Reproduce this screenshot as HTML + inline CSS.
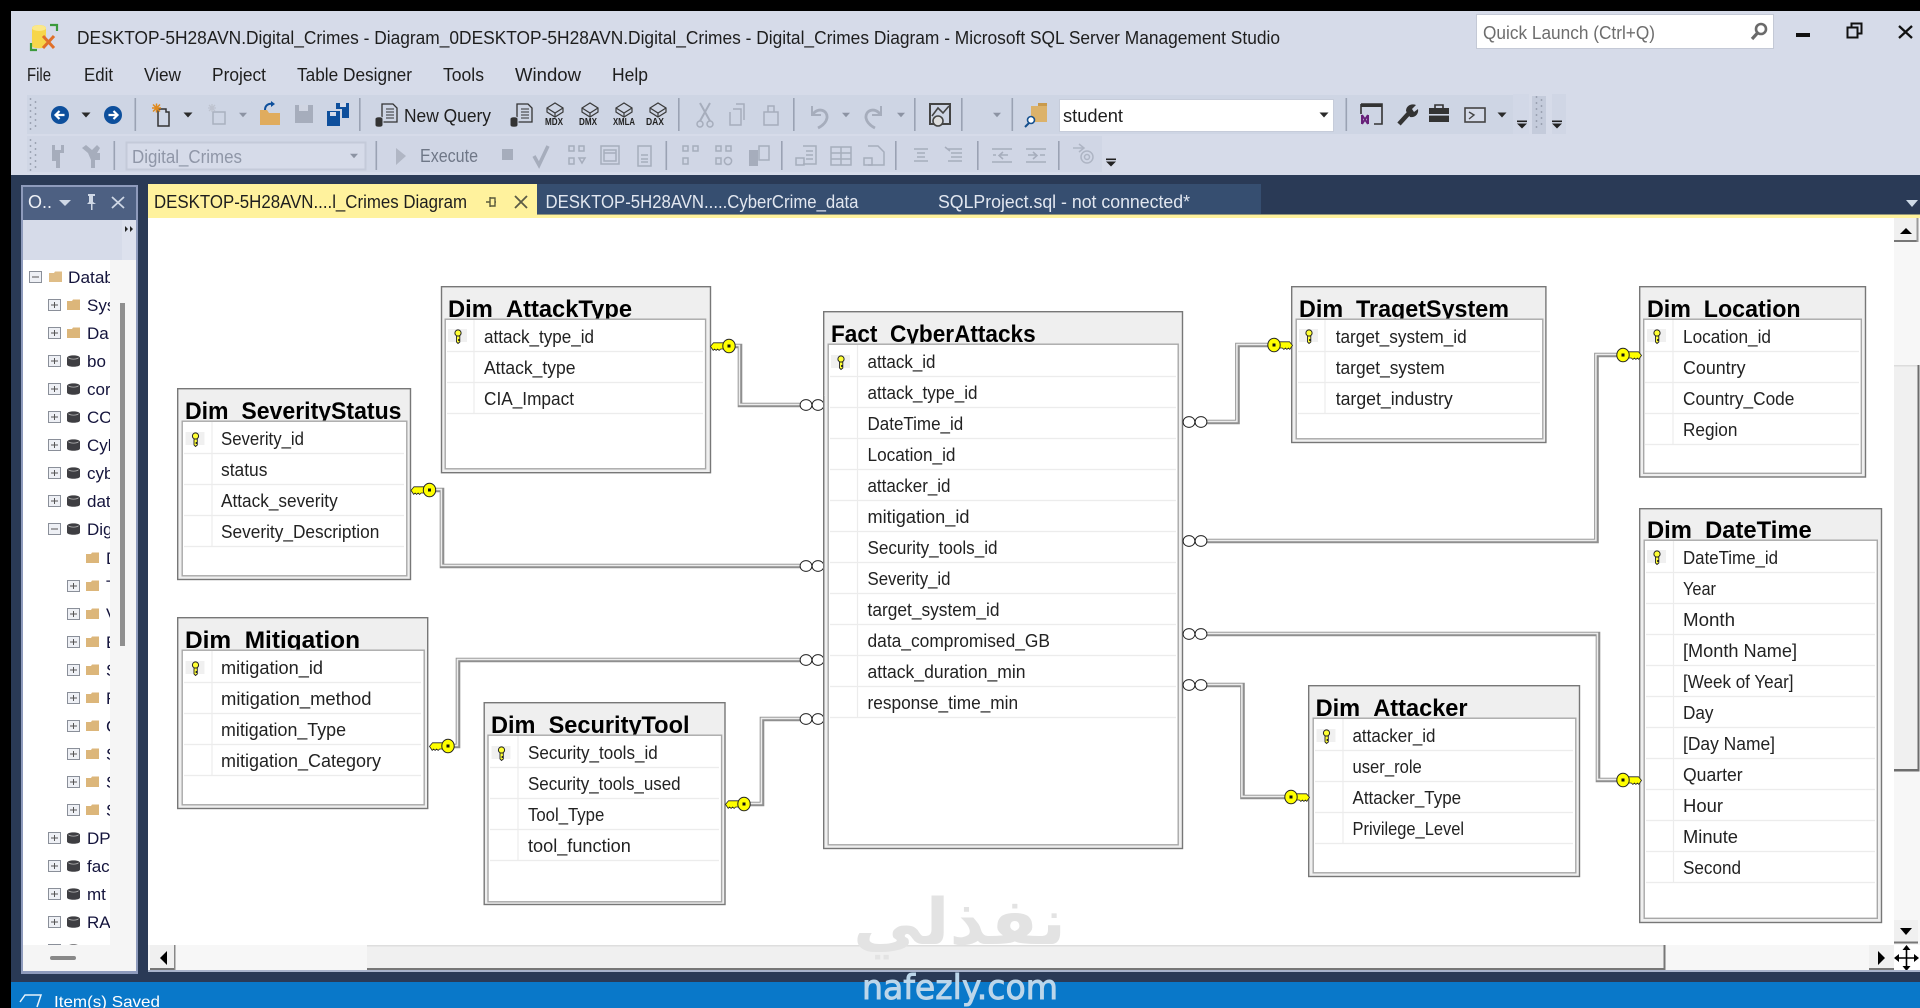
<!DOCTYPE html>
<html lang="en">
<head>
<meta charset="utf-8">
<title>Digital_Crimes Diagram - Microsoft SQL Server Management Studio</title>
<style>
html,body{margin:0;padding:0;background:#000;width:1920px;height:1008px;overflow:hidden}
svg{display:block}
text{font-family:"Liberation Sans",sans-serif;white-space:pre}
.r{font-size:18px;fill:#222}
.h{font-size:24px;font-weight:bold;fill:#000}
.m{font-size:18px;fill:#1e1e1e}
.tr{font-size:17px;fill:#14143c}
.o{fill:#efefef;stroke:#777;stroke-width:1.4}
.i{fill:#fff;stroke:#a8a8a8;stroke-width:1.4}
.l{stroke:#ececec;stroke-width:1.2;fill:none}
.c1{fill:none;stroke:#8f8f8f;stroke-width:4.6}
.c2{fill:none;stroke:#ececec;stroke-width:1.6}
.d{fill:none;stroke:#a6adbc;stroke-width:1.5}
.df{fill:#a6adbc}
.sep{fill:#9aa2b3}
</style>
</head>
<body>
<svg xmlns="http://www.w3.org/2000/svg" width="1920" height="1008" viewBox="0 0 1920 1008">
<defs>
<clipPath id="treeclip"><rect x="23" y="260" width="87" height="685"/></clipPath>
<g id="pk">
<rect x="-10" y="-7" width="19" height="13" fill="#f0f0f0"/>
<circle cx="0" cy="-3" r="3.1" fill="#ffff33" stroke="#222" stroke-width="1"/>
<path d="M-1.5 0V6L0 7.5L1.8 6V4.5H0.6V3.5H1.8V0Z" fill="#ffff33" stroke="#222" stroke-width="0.9"/>
</g>
<g id="key">
<path d="M5 -3.2H15.5L18.5 0.4L15.8 4.4L14.4 3L12.9 4.4L11.4 3L9.9 4.4L8.3 3H5Z" fill="#ffff00" stroke="#222" stroke-width="0.8"/>
<ellipse cx="0" cy="0" rx="6.2" ry="6.8" fill="#ffff00" stroke="#222" stroke-width="1"/>
<rect x="-1.5" y="-1.5" width="3" height="3" fill="#111"/>
</g>
<g id="inf">
<ellipse cx="-6" cy="0" rx="5.9" ry="5.4" fill="#fff" stroke="#222" stroke-width="1"/>
<ellipse cx="6" cy="0" rx="5.9" ry="5.4" fill="#fff" stroke="#222" stroke-width="1"/>
</g>
<g id="ep"><rect x="0.5" y="-5.5" width="12" height="11" fill="#eef0f5" stroke="#8a8f99"/><path d="M3 0H10M6.5 -3V3" stroke="#555" stroke-width="1"/></g>
<g id="em"><rect x="0.5" y="-5.5" width="12" height="11" fill="#eef0f5" stroke="#8a8f99"/><path d="M3 0H10" stroke="#555" stroke-width="1"/></g>
<path id="fo" d="M0 -4H5L6 -5.5H13V5H0Z" fill="#dcb67a"/>
<g id="db"><path d="M0 -3C0 -6.5 13 -6.5 13 -3V3.5C13 6.5 0 6.5 0 3.5Z" fill="#3e3e42"/><path d="M1.5 -3.2C3 -1.4 10 -1.4 11.5 -3.2" stroke="#bbb" stroke-width="0.8" fill="none"/></g>
<path id="tri" d="M-4.5 -2.5H4.5L0 2.5Z" fill="#2a2a2a"/>
<path id="trid" d="M-4 -2.2H4L0 2.2Z" fill="#8c93a3"/>
<g id="ovf"><rect x="-5" y="-4.5" width="10" height="1.6" fill="#222"/><path d="M-5 -1.5H5L0 3.5Z" fill="#222"/></g>
<g id="grip" fill="#8f96a6">
<circle cx="-2.5" cy="-15" r="0.9"/><circle cx="2.5" cy="-12" r="0.9"/><circle cx="-2.5" cy="-9" r="0.9"/><circle cx="2.5" cy="-6" r="0.9"/><circle cx="-2.5" cy="-3" r="0.9"/><circle cx="2.5" cy="0" r="0.9"/><circle cx="-2.5" cy="3" r="0.9"/><circle cx="2.5" cy="6" r="0.9"/><circle cx="-2.5" cy="9" r="0.9"/><circle cx="2.5" cy="12" r="0.9"/><circle cx="-2.5" cy="15" r="0.9"/>
</g>
<g id="cube" fill="none" stroke="#3a3a3a" stroke-width="1.2"><path d="M-8 -3L0 -8L8 -3V1L0 6L-8 1Z"/><path d="M-8 -3L0 2L8 -3M0 2V6"/></g>
<g id="sheet" fill="none" stroke="#333" stroke-width="1.3"><path d="M-5 -10H6L10 -6V8H-5Z"/><path d="M-1 -5H7M-1 -2H7M-1 1H7M-1 4H7" stroke-width="1"/></g>
</defs>

<!-- window chrome -->
<rect x="0" y="0" width="1920" height="1008" fill="#000"/>
<rect x="11" y="11" width="1909" height="997" fill="#d6dbe9"/>

<!-- app icon -->
<g transform="translate(30,22)">
<path d="M2 6C2 2 16 2 16 6V24C16 27 2 27 2 24Z" fill="#f7d64a"/>
<ellipse cx="9" cy="6" rx="7" ry="3" fill="#fbe88a"/>
<path d="M20 3H27V9" fill="none" stroke="#3c9a3c" stroke-width="2.2"/>
<path d="M1 21V28H7" fill="none" stroke="#3c9a3c" stroke-width="2.2"/>
<path d="M13 14L24 26M24 14L13 26" stroke="#e0702a" stroke-width="3"/>
</g>
<text x="77" y="44" class="m" textLength="1203" lengthAdjust="spacingAndGlyphs">DESKTOP-5H28AVN.Digital_Crimes - Diagram_0DESKTOP-5H28AVN.Digital_Crimes - Digital_Crimes Diagram - Microsoft SQL Server Management Studio</text>

<!-- quick launch -->
<rect x="1476.5" y="14.5" width="297" height="34" fill="#fff" stroke="#c4c9d6"/>
<text x="1483" y="39" font-size="18" fill="#6d6d6d" textLength="172" lengthAdjust="spacingAndGlyphs">Quick Launch (Ctrl+Q)</text>
<g transform="translate(1759,32)"><circle cx="2" cy="-3" r="5" fill="none" stroke="#6a6a6a" stroke-width="2.6"/><path d="M-1.5 1L-7 7" stroke="#6a6a6a" stroke-width="3.2"/></g>
<rect x="1796" y="33" width="14" height="4" fill="#111"/>
<path d="M1851.5 26.5V23.5H1861.5V33.5H1858M1847.5 27.5H1857.5V37.5H1847.5Z" fill="none" stroke="#111" stroke-width="2"/>
<path d="M1899 26L1912 38M1912 26L1899 38" stroke="#111" stroke-width="2.3"/>

<!-- menu -->
<text x="27" y="81" class="m" textLength="24" lengthAdjust="spacingAndGlyphs">File</text>
<text x="84" y="81" class="m" textLength="29" lengthAdjust="spacingAndGlyphs">Edit</text>
<text x="144" y="81" class="m" textLength="37" lengthAdjust="spacingAndGlyphs">View</text>
<text x="212" y="81" class="m" textLength="54" lengthAdjust="spacingAndGlyphs">Project</text>
<text x="297" y="81" class="m" textLength="115" lengthAdjust="spacingAndGlyphs">Table Designer</text>
<text x="443" y="81" class="m" textLength="41" lengthAdjust="spacingAndGlyphs">Tools</text>
<text x="515" y="81" class="m" textLength="66" lengthAdjust="spacingAndGlyphs">Window</text>
<text x="612" y="81" class="m" textLength="36" lengthAdjust="spacingAndGlyphs">Help</text>

<!-- toolbar 1 -->
<rect x="27" y="95" width="1486" height="39" fill="#ced5e4"/>
<rect x="1552" y="94" width="14" height="40" fill="#d0d6e5"/>
<rect x="1513" y="94" width="16" height="40" fill="#d2d8e7"/>
<rect x="1532" y="96" width="14" height="38" fill="#c4cbdb"/>
<use href="#grip" x="33" y="114"/>
<g transform="translate(60,115)"><circle r="9" fill="#0d4f9c"/><path d="M4.5 0H-3.5M-0.5 -4L-4.5 0L-0.5 4" stroke="#fff" stroke-width="2.2" fill="none"/></g>
<use href="#tri" x="86" y="115"/>
<g transform="translate(113,115)"><circle r="9" fill="#0d4f9c"/><path d="M-4.5 0H3.5M0.5 -4L4.5 0L0.5 4" stroke="#fff" stroke-width="2.2" fill="none"/></g>
<rect x="134.5" y="98" width="1.6" height="33" class="sep"/>
<g transform="translate(161,115)"><path d="M-3 -6H5V-3H8V11H-3Z" fill="none" stroke="#333" stroke-width="1.5"/><path d="M-9 -7H0M-4.500 -11.500V-2.500M-8 -10.500L-1 -3.500M-1 -10.500L-8 -3.500" stroke="#e08a1e" stroke-width="1.5"/></g>
<use href="#tri" x="188" y="115"/>
<g transform="translate(217,116)" opacity="0.9"><path d="M-4 -4H8V8H-4Z" class="d" stroke-width="2"/><path d="M-9 -8H-1M-5 -12V-4M-8 -11L-2 -5M-2 -11L-8 -5" stroke="#bdc2cd" stroke-width="1.3"/></g>
<use href="#trid" x="243" y="115"/>
<g transform="translate(270,116)"><path d="M-10 -6H-3L-1 -3H10V9H-10Z" fill="#e0ac5e"/><path d="M-5 -6C-5 -11 -1 -13 3 -12" stroke="#0d4f9c" stroke-width="2" fill="none"/><path d="M1 -15L5 -12L1 -9Z" fill="#0d4f9c"/></g>
<g transform="translate(304,114)"><path d="M-9 -9H9V9H-9Z" fill="#a6adbc"/><rect x="-5" y="-9" width="9" height="6" fill="#d0d5e2"/></g>
<g transform="translate(338,115)" fill="#0e4f9c"><path d="M-11 -4H2V11H-11Z"/><path d="M-2 -12H11V3H4V-6H-2Z"/><rect x="2" y="-12" width="6" height="4" fill="#d6dbe9"/><rect x="-8" y="-3" width="6" height="4" fill="#d6dbe9"/></g>
<rect x="359" y="98" width="1.6" height="33" class="sep"/>
<use href="#sheet" x="387" y="114"/>
<g transform="translate(379,122)"><path d="M-4 -3C-4 -6 4 -6 4 -3V3C4 6 -4 6 -4 3Z" fill="#333" stroke="#ced5e4"/></g>
<text x="404" y="122" class="m" textLength="87" lengthAdjust="spacingAndGlyphs">New Query</text>
<use href="#sheet" x="522" y="114"/>
<g transform="translate(514,122)"><path d="M-4 -3C-4 -6 4 -6 4 -3V3C4 6 -4 6 -4 3Z" fill="#333" stroke="#ced5e4"/></g>
<use href="#cube" x="555" y="111"/><text x="554" y="125" text-anchor="middle" font-size="10" font-weight="bold" fill="#222" textLength="18" lengthAdjust="spacingAndGlyphs">MDX</text>
<use href="#cube" x="590" y="111"/><text x="588" y="125" text-anchor="middle" font-size="10" font-weight="bold" fill="#222" textLength="18" lengthAdjust="spacingAndGlyphs">DMX</text>
<use href="#cube" x="624" y="111"/><text x="624" y="125" text-anchor="middle" font-size="10" font-weight="bold" fill="#222" textLength="22" lengthAdjust="spacingAndGlyphs">XMLA</text>
<use href="#cube" x="658" y="111"/><text x="655" y="125" text-anchor="middle" font-size="10" font-weight="bold" fill="#222" textLength="18" lengthAdjust="spacingAndGlyphs">DAX</text>
<rect x="678" y="98" width="1.6" height="33" class="sep"/>
<g class="d"><path d="M700 103L710 121M710 103L700 121" stroke-width="2"/><circle cx="700" cy="124" r="3"/><circle cx="710" cy="124" r="3"/></g>
<path d="M733 109H741V125H730V112M736 104H744V120" class="d"/>
<path d="M764 112H778V125H764ZM768 112V106H774V112" class="d"/>
<rect x="793" y="98" width="1.6" height="33" class="sep"/>
<path d="M812 106V115H821" fill="none" stroke="#a6adbc" stroke-width="2"/><path d="M813 114C818 107 828 110 827 118C826 123 822 126 818 128" fill="none" stroke="#a6adbc" stroke-width="2.8"/>
<use href="#trid" x="846" y="115"/>
<path d="M881 106V115H872" fill="none" stroke="#a6adbc" stroke-width="2"/><path d="M880 114C875 107 865 110 866 118C867 123 871 126 875 128" fill="none" stroke="#a6adbc" stroke-width="2.8"/>
<use href="#trid" x="901" y="115"/>
<rect x="914" y="98" width="1.6" height="33" class="sep"/>
<g transform="translate(940,114)"><rect x="-10" y="-10" width="20" height="20" fill="none" stroke="#444" stroke-width="2"/><path d="M-8 2L-2 -6L3 -1L9 -8" stroke="#444" stroke-width="1.6" fill="none"/><circle cx="-2" cy="7" r="5" fill="#ddd" stroke="#444" stroke-width="1.6"/></g>
<rect x="961" y="98" width="1.6" height="33" class="sep"/>
<use href="#trid" x="997" y="115"/>
<rect x="1011.5" y="98" width="1.6" height="33" class="sep"/>
<g transform="translate(1038,114)"><path d="M-7 -8H9V8H-7Z" fill="#dcb26a"/><path d="M-7 -8H0V-11H9V-8Z" fill="#c99a4c"/><circle cx="-7" cy="6" r="3.5" fill="#fff" stroke="#15508e" stroke-width="1.6"/><path d="M-9 9L-13 13" stroke="#15508e" stroke-width="2"/></g>
<rect x="1059.5" y="99.5" width="274" height="32" fill="#fff" stroke="#c6ccda"/>
<text x="1063" y="122" class="m" fill="#111" textLength="60" lengthAdjust="spacingAndGlyphs">student</text>
<use href="#tri" x="1324" y="115"/>
<rect x="1345.5" y="98" width="1.6" height="33" class="sep"/>
<g transform="translate(1371,114)"><path d="M-10 -10H11V10H3M-10 -10V0" fill="none" stroke="#333" stroke-width="1.6"/><rect x="-10" y="-10" width="21" height="3" fill="#333"/><path d="M-9 1L-3 10M-9 10L-3 1M-3 1V10M-9 1V10" stroke="#68217a" stroke-width="2" fill="none"/></g>
<g transform="translate(1407,114)"><path d="M-8 10L2 -1" stroke="#333" stroke-width="4.5"/><path d="M-1 -3C-1 -8 4 -11 9 -9L5 -5L7 -2L11 -5C12 0 8 4 3 3Z" fill="#333"/></g>
<g transform="translate(1439,114)"><rect x="-10" y="-6" width="20" height="14" fill="#333"/><path d="M-4 -6V-9H4V-6" fill="none" stroke="#333" stroke-width="1.6"/><rect x="-10" y="0" width="20" height="1.6" fill="#ced5e4"/></g>
<g transform="translate(1475,115)"><rect x="-10" y="-7" width="20" height="14" fill="#d6dbe9" stroke="#444" stroke-width="1.6"/><path d="M-6 -3L-1 0L-6 4" fill="none" stroke="#444" stroke-width="1.4"/></g>
<use href="#tri" x="1502" y="115"/>
<use href="#ovf" x="1522" y="125"/>
<use href="#grip" x="1539" y="112"/>
<use href="#ovf" x="1557" y="125"/>

<!-- toolbar 2 -->
<rect x="27" y="136" width="1075" height="36" fill="#d0d6e5"/>
<use href="#grip" x="33" y="155"/>
<g class="df"><path d="M52 145H55V150H61V145H64V153H60V161H60V168H56V161H52Z"/><path d="M86 145L92 150L97 145L100 148L97 153H100V160H95V168H91V160L88 153L82 148Z"/></g>
<rect x="113.5" y="141" width="1.6" height="29" class="sep"/>
<rect x="126.5" y="142.5" width="239" height="27" fill="#d6dbe9" stroke="#c4cad9" stroke-width="2"/>
<text x="132" y="163" font-size="18" fill="#8f96a7" textLength="110" lengthAdjust="spacingAndGlyphs">Digital_Crimes</text>
<use href="#trid" x="354" y="156"/>
<rect x="375.5" y="141" width="1.6" height="29" class="sep"/>
<path d="M396 148L406 156L396 165Z" fill="#b0b6c4"/>
<text x="420" y="162" font-size="18" fill="#6f7787" textLength="58" lengthAdjust="spacingAndGlyphs">Execute</text>
<rect x="502" y="149" width="11" height="11" fill="#a6adbc"/>
<path d="M534 156L539 165L548 146" fill="none" stroke="#a6adbc" stroke-width="3.5"/>
<g class="d"><rect x="569" y="146" width="5" height="5"/><rect x="579" y="146" width="5" height="5"/><rect x="569" y="158" width="5" height="6"/><path d="M579 158H585L582 163Z"/></g>
<g class="d"><rect x="601" y="146" width="18" height="18"/><rect x="604" y="150" width="12" height="11"/><path d="M604 153H616"/></g>
<g class="d"><rect x="638" y="146" width="13" height="20"/><path d="M641 155H648M641 159H648M641 162H648"/></g>
<rect x="665.5" y="141" width="1.6" height="29" class="sep"/>
<g class="d"><rect x="683" y="146" width="5" height="5"/><rect x="693" y="146" width="5" height="5"/><rect x="683" y="158" width="5" height="6"/></g>
<g class="d"><rect x="716" y="146" width="5" height="5"/><rect x="726" y="146" width="5" height="5"/><rect x="716" y="158" width="5" height="6"/><circle cx="728" cy="161" r="3.6"/></g>
<g><rect x="749" y="150" width="9" height="16" fill="#a6adbc"/><rect x="759" y="146" width="10" height="14" fill="none" stroke="#a6adbc" stroke-width="1.5"/></g>
<rect x="781" y="141" width="1.6" height="29" class="sep"/>
<g class="d"><path d="M803 146H816V164H803M806 151H813M806 155H813M806 159H813"/><rect x="796" y="158" width="8" height="7"/></g>
<g class="d"><rect x="831" y="147" width="20" height="18"/><path d="M831 153H851M831 159H851M841 147V165"/></g>
<g class="d"><path d="M868 146H878L884 152V165H868"/><rect x="864" y="158" width="8" height="7"/></g>
<rect x="895" y="141" width="1.6" height="29" class="sep"/>
<path d="M914 149H928M917 153H925M917 157H925M914 161H928" class="d"/>
<path d="M948 149H962M951 153H962M951 157H962M948 161H962M945 147L950 151" class="d"/>
<rect x="977" y="141" width="1.6" height="29" class="sep"/>
<path d="M992 149H1012M992 162H1012M1008 155H1000M1003 152L999 155.500L1003 159M993 155H996" class="d"/>
<path d="M1026 149H1046M1026 162H1046M1028 155H1036M1033 152L1037 155.500L1033 159M1040 155H1045" class="d"/>
<rect x="1058" y="141" width="1.6" height="29" class="sep"/>
<g class="d" opacity="0.8"><path d="M1073 148H1083M1079 144L1084 148L1079 152"/><circle cx="1087" cy="157" r="6"/><circle cx="1087" cy="157" r="2.5"/></g>
<use href="#ovf" x="1111" y="163"/>

<!-- dark band -->
<rect x="11" y="175" width="1909" height="807" fill="#2a3a56"/>
<rect x="11" y="982" width="1909" height="26" fill="#0978c9"/>

<!-- tabs -->
<rect x="537" y="184" width="724" height="30" fill="#364e70"/>
<rect x="148" y="184" width="389" height="34" fill="#fff29d"/>
<rect x="148" y="214.500" width="1772" height="3.500" fill="#fff29d"/>
<text x="154" y="208" class="m" fill="#1e1e1e" textLength="313" lengthAdjust="spacingAndGlyphs">DESKTOP-5H28AVN....l_Crimes Diagram</text>
<path d="M486 202H490M490 197V207M490 198H495V206H490M495 202H496" fill="none" stroke="#5a5a3c" stroke-width="1.4"/>
<path d="M515 196L527 208M527 196L515 208" stroke="#5c5c46" stroke-width="1.8"/>
<text x="545.500" y="208" font-size="18" fill="#e2e7f0" textLength="313" lengthAdjust="spacingAndGlyphs">DESKTOP-5H28AVN.....CyberCrime_data</text>
<text x="938" y="208" font-size="18" fill="#e2e7f0" textLength="252" lengthAdjust="spacingAndGlyphs">SQLProject.sql - not connected*</text>
<path d="M1906 200H1918L1912 207Z" fill="#cfdbe8"/>

<!-- object explorer panel -->
<rect x="21" y="185" width="117" height="789" fill="#8e9bbc"/>
<rect x="23" y="187" width="113" height="33" fill="#4d6082"/>
<text x="28" y="208" font-size="18" fill="#eef1f6" textLength="24" lengthAdjust="spacingAndGlyphs">O..</text>
<path d="M59 200H71L65 206Z" fill="#cfd8e6"/>
<path d="M88 194H95V196H93V202L96 204H92.500V210H91V204H87L89 202V196H88Z" fill="#cfd8e6"/>
<path d="M112 197L124 208M124 197L112 208" stroke="#cfd8e6" stroke-width="1.800"/>
<rect x="23" y="220" width="113" height="40" fill="#d6dbe9"/>
<rect x="122" y="220" width="14" height="40" fill="#dde1ed"/>
<path d="M125 226L128 229L125 232ZM130 226L133 229L130 232Z" fill="#222"/>
<rect x="23" y="260" width="113" height="711" fill="#f5f5f5"/>
<rect x="23" y="260" width="87" height="685" fill="#fff"/>
<rect x="120" y="303" width="5" height="343" fill="#8f8f8f"/>
<rect x="50" y="956" width="26" height="4" rx="2" fill="#888"/>
<g clip-path="url(#treeclip)">
<use href="#em" x="29" y="277"/><use href="#fo" x="49" y="277" opacity="0.9"/><text x="68" y="283" class="tr" textLength="46" lengthAdjust="spacingAndGlyphs">Datab</text>
<use href="#ep" x="48" y="305"/><use href="#fo" x="67" y="305"/><text x="87" y="311" class="tr">Sys</text>
<use href="#ep" x="48" y="333"/><use href="#fo" x="67" y="333"/><text x="87" y="339" class="tr">Da</text>
<use href="#ep" x="48" y="361"/><use href="#db" x="67" y="361"/><text x="87" y="367" class="tr">bo</text>
<use href="#ep" x="48" y="389"/><use href="#db" x="67" y="389"/><text x="87" y="395" class="tr">cor</text>
<use href="#ep" x="48" y="417"/><use href="#db" x="67" y="417"/><text x="87" y="423" class="tr">CO</text>
<use href="#ep" x="48" y="445"/><use href="#db" x="67" y="445"/><text x="87" y="451" class="tr">Cyl</text>
<use href="#ep" x="48" y="473"/><use href="#db" x="67" y="473"/><text x="87" y="479" class="tr">cyb</text>
<use href="#ep" x="48" y="501"/><use href="#db" x="67" y="501"/><text x="87" y="507" class="tr">dat</text>
<use href="#em" x="48" y="529"/><use href="#db" x="67" y="529"/><text x="87" y="535" class="tr">Dig</text>
<use href="#fo" x="86" y="558"/><text x="106" y="564" class="tr">D</text>
<use href="#ep" x="67" y="586"/><use href="#fo" x="86" y="586"/><text x="106" y="592" class="tr">T</text>
<use href="#ep" x="67" y="614"/><use href="#fo" x="86" y="614"/><text x="106" y="620" class="tr">V</text>
<use href="#ep" x="67" y="642"/><use href="#fo" x="86" y="642"/><text x="106" y="648" class="tr">E</text>
<use href="#ep" x="67" y="670"/><use href="#fo" x="86" y="670"/><text x="106" y="676" class="tr">S</text>
<use href="#ep" x="67" y="698"/><use href="#fo" x="86" y="698"/><text x="106" y="704" class="tr">F</text>
<use href="#ep" x="67" y="726"/><use href="#fo" x="86" y="726"/><text x="106" y="732" class="tr">C</text>
<use href="#ep" x="67" y="754"/><use href="#fo" x="86" y="754"/><text x="106" y="760" class="tr">S</text>
<use href="#ep" x="67" y="782"/><use href="#fo" x="86" y="782"/><text x="106" y="788" class="tr">S</text>
<use href="#ep" x="67" y="810"/><use href="#fo" x="86" y="810"/><text x="106" y="816" class="tr">S</text>
<use href="#ep" x="48" y="838"/><use href="#db" x="67" y="838"/><text x="87" y="844" class="tr">DP</text>
<use href="#ep" x="48" y="866"/><use href="#db" x="67" y="866"/><text x="87" y="872" class="tr">fac</text>
<use href="#ep" x="48" y="894"/><use href="#db" x="67" y="894"/><text x="87" y="900" class="tr">mt</text>
<use href="#ep" x="48" y="922"/><use href="#db" x="67" y="922"/><text x="87" y="928" class="tr">RA</text>
<use href="#ep" x="48" y="950"/><use href="#db" x="67" y="950"/>
</g>

<!-- document area -->
<rect x="148" y="218" width="1772" height="752" fill="#fff"/>

<!-- connectors -->
<g>
<path class="c1" d="M435 490H442V566H800"/><path class="c2" d="M435 489.400H441.400V565.400H800"/>
<path class="c1" d="M735 346H740V405H800"/><path class="c2" d="M735 345.400H739.400V404.400H800"/>
<path class="c1" d="M453 746H458V660H800"/><path class="c2" d="M453 745.400H457.400V659.400H800"/>
<path class="c1" d="M749 804H762V719H800"/><path class="c2" d="M749 803.400H761.400V718.400H800"/>
<path class="c1" d="M1207 422H1237.500V345H1268"/><path class="c2" d="M1207 421.400H1236.900V344.400H1268"/>
<path class="c1" d="M1207 541H1596.500V355H1617"/><path class="c2" d="M1207 540.400H1595.900V354.400H1617"/>
<path class="c1" d="M1207 634H1598V780H1617"/><path class="c2" d="M1207 633.400H1597.400V779.400H1617"/>
<path class="c1" d="M1207 685H1242.500V797H1285"/><path class="c2" d="M1207 684.400H1241.900V796.400H1285"/>
</g>

<!-- Dim_AttackType -->
<rect x="441.500" y="286.700" width="269" height="186" class="o"/>
<text x="448" y="317" class="h" textLength="184" lengthAdjust="spacingAndGlyphs">Dim_AttackType</text>
<rect x="445.200" y="319.200" width="260.400" height="149.600" class="i"/>
<path class="l" d="M447 351.500H703M447 382.500H703M447 413.500H703M474 320V413"/>
<use href="#pk" x="458" y="336"/>
<text x="484" y="343" class="r" textLength="110" lengthAdjust="spacingAndGlyphs">attack_type_id</text>
<text x="484" y="374" class="r" textLength="91.500" lengthAdjust="spacingAndGlyphs">Attack_type</text>
<text x="484" y="405" class="r" textLength="90" lengthAdjust="spacingAndGlyphs">CIA_Impact</text>

<!-- Dim_SeverityStatus -->
<rect x="177.700" y="388.700" width="232.800" height="190.800" class="o"/>
<text x="185" y="419" class="h" textLength="216.500" lengthAdjust="spacingAndGlyphs">Dim_SeverityStatus</text>
<rect x="182.200" y="421.200" width="224.600" height="154.600" class="i"/>
<path class="l" d="M184 453.500H404M184 484.500H404M184 515.500H404M184 546.500H404M212 422V546"/>
<use href="#pk" x="195.500" y="439"/>
<text x="221" y="445" class="r" textLength="83" lengthAdjust="spacingAndGlyphs">Severity_id</text>
<text x="221" y="476" class="r" textLength="46.400" lengthAdjust="spacingAndGlyphs">status</text>
<text x="221" y="507" class="r" textLength="116.700" lengthAdjust="spacingAndGlyphs">Attack_severity</text>
<text x="221" y="538" class="r" textLength="158.300" lengthAdjust="spacingAndGlyphs">Severity_Description</text>

<!-- Dim_Mitigation -->
<rect x="177.700" y="617.700" width="250" height="190.800" class="o"/>
<text x="185" y="648" class="h" textLength="175" lengthAdjust="spacingAndGlyphs">Dim_Mitigation</text>
<rect x="182.200" y="650.200" width="242" height="154.600" class="i"/>
<path class="l" d="M184 682.500H421M184 713.500H421M184 744.500H421M184 775.500H421M212 651V775"/>
<use href="#pk" x="195.500" y="668"/>
<text x="221" y="674" class="r" textLength="102" lengthAdjust="spacingAndGlyphs">mitigation_id</text>
<text x="221" y="705" class="r" textLength="150.500" lengthAdjust="spacingAndGlyphs">mitigation_method</text>
<text x="221" y="736" class="r" textLength="125" lengthAdjust="spacingAndGlyphs">mitigation_Type</text>
<text x="221" y="767" class="r" textLength="160" lengthAdjust="spacingAndGlyphs">mitigation_Category</text>

<!-- Dim_SecurityTool -->
<rect x="484.200" y="702.700" width="240.800" height="201.800" class="o"/>
<text x="491" y="733" class="h" textLength="198.500" lengthAdjust="spacingAndGlyphs">Dim_SecurityTool</text>
<rect x="488" y="735.200" width="233.600" height="166.600" class="i"/>
<path class="l" d="M490 767.500H719M490 798.500H719M490 829.500H719M490 860.500H719M518 736V860"/>
<use href="#pk" x="501.500" y="753"/>
<text x="528" y="759" class="r" textLength="129.700" lengthAdjust="spacingAndGlyphs">Security_tools_id</text>
<text x="528" y="790" class="r" textLength="152.600" lengthAdjust="spacingAndGlyphs">Security_tools_used</text>
<text x="528" y="821" class="r" textLength="76.300" lengthAdjust="spacingAndGlyphs">Tool_Type</text>
<text x="528" y="852" class="r" textLength="102.800" lengthAdjust="spacingAndGlyphs">tool_function</text>

<!-- Fact_CyberAttacks -->
<rect x="823.700" y="311.700" width="358.800" height="536.800" class="o"/>
<text x="831" y="342" class="h" textLength="204.700" lengthAdjust="spacingAndGlyphs">Fact_CyberAttacks</text>
<rect x="828.200" y="344.200" width="350" height="500.600" class="i"/>
<path class="l" d="M830 376.500H1176M830 407.500H1176M830 438.500H1176M830 469.500H1176M830 500.500H1176M830 531.500H1176M830 562.500H1176M830 593.500H1176M830 624.500H1176M830 655.500H1176M830 686.500H1176M830 717.500H1176M857.500 345V717"/>
<use href="#pk" x="841" y="362"/>
<text x="867.500" y="368" class="r" textLength="68" lengthAdjust="spacingAndGlyphs">attack_id</text>
<text x="867.500" y="399" class="r" textLength="110" lengthAdjust="spacingAndGlyphs">attack_type_id</text>
<text x="867.500" y="430" class="r" textLength="95.700" lengthAdjust="spacingAndGlyphs">DateTime_id</text>
<text x="867.500" y="461" class="r" textLength="88" lengthAdjust="spacingAndGlyphs">Location_id</text>
<text x="867.500" y="492" class="r" textLength="83" lengthAdjust="spacingAndGlyphs">attacker_id</text>
<text x="867.500" y="523" class="r" textLength="102" lengthAdjust="spacingAndGlyphs">mitigation_id</text>
<text x="867.500" y="554" class="r" textLength="130" lengthAdjust="spacingAndGlyphs">Security_tools_id</text>
<text x="867.500" y="585" class="r" textLength="83" lengthAdjust="spacingAndGlyphs">Severity_id</text>
<text x="867.500" y="616" class="r" textLength="132" lengthAdjust="spacingAndGlyphs">target_system_id</text>
<text x="867.500" y="647" class="r" textLength="182.500" lengthAdjust="spacingAndGlyphs">data_compromised_GB</text>
<text x="867.500" y="678" class="r" textLength="158" lengthAdjust="spacingAndGlyphs">attack_duration_min</text>
<text x="867.500" y="709" class="r" textLength="150.600" lengthAdjust="spacingAndGlyphs">response_time_min</text>

<!-- Dim_TragetSystem -->
<rect x="1291.700" y="286.700" width="254.200" height="155.800" class="o"/>
<text x="1299" y="317" class="h" textLength="210" lengthAdjust="spacingAndGlyphs">Dim_TragetSystem</text>
<rect x="1296.200" y="319.200" width="246.600" height="119.600" class="i"/>
<path class="l" d="M1298 351.500H1540M1298 382.500H1540M1298 413.500H1540M1325 320V413"/>
<use href="#pk" x="1309" y="336"/>
<text x="1335.700" y="343" class="r" textLength="131" lengthAdjust="spacingAndGlyphs">target_system_id</text>
<text x="1335.700" y="374" class="r" textLength="109" lengthAdjust="spacingAndGlyphs">target_system</text>
<text x="1335.700" y="405" class="r" textLength="117" lengthAdjust="spacingAndGlyphs">target_industry</text>

<!-- Dim_Location -->
<rect x="1639.700" y="286.700" width="225.800" height="190.300" class="o"/>
<text x="1647" y="317" class="h" textLength="153.600" lengthAdjust="spacingAndGlyphs">Dim_Location</text>
<rect x="1643.700" y="319.200" width="217.600" height="154.100" class="i"/>
<path class="l" d="M1645 351.500H1859M1645 382.500H1859M1645 413.500H1859M1645 444.500H1859M1673 320V444"/>
<use href="#pk" x="1657" y="336"/>
<text x="1683" y="343" class="r" textLength="88" lengthAdjust="spacingAndGlyphs">Location_id</text>
<text x="1683" y="374" class="r" textLength="62.500" lengthAdjust="spacingAndGlyphs">Country</text>
<text x="1683" y="405" class="r" textLength="111.400" lengthAdjust="spacingAndGlyphs">Country_Code</text>
<text x="1683" y="436" class="r" textLength="54.400" lengthAdjust="spacingAndGlyphs">Region</text>

<!-- Dim_DateTime -->
<rect x="1639.700" y="508.700" width="241.800" height="413.800" class="o"/>
<text x="1647" y="538" class="h" textLength="164.700" lengthAdjust="spacingAndGlyphs">Dim_DateTime</text>
<rect x="1644.200" y="540.200" width="233.100" height="378.100" class="i"/>
<path class="l" d="M1646 572.500H1875M1646 603.500H1875M1646 634.500H1875M1646 665.500H1875M1646 696.500H1875M1646 727.500H1875M1646 758.500H1875M1646 789.500H1875M1646 820.500H1875M1646 851.500H1875M1646 882.500H1875M1673.500 541V882"/>
<use href="#pk" x="1657" y="557"/>
<text x="1683" y="564" class="r" textLength="95" lengthAdjust="spacingAndGlyphs">DateTime_id</text>
<text x="1683" y="595" class="r" textLength="33" lengthAdjust="spacingAndGlyphs">Year</text>
<text x="1683" y="626" class="r" textLength="52" lengthAdjust="spacingAndGlyphs">Month</text>
<text x="1683" y="657" class="r" textLength="114" lengthAdjust="spacingAndGlyphs">[Month Name]</text>
<text x="1683" y="688" class="r" textLength="110.500" lengthAdjust="spacingAndGlyphs">[Week of Year]</text>
<text x="1683" y="719" class="r" textLength="30.500" lengthAdjust="spacingAndGlyphs">Day</text>
<text x="1683" y="750" class="r" textLength="92" lengthAdjust="spacingAndGlyphs">[Day Name]</text>
<text x="1683" y="781" class="r" textLength="59.600" lengthAdjust="spacingAndGlyphs">Quarter</text>
<text x="1683" y="812" class="r" textLength="40" lengthAdjust="spacingAndGlyphs">Hour</text>
<text x="1683" y="843" class="r" textLength="55" lengthAdjust="spacingAndGlyphs">Minute</text>
<text x="1683" y="874" class="r" textLength="58" lengthAdjust="spacingAndGlyphs">Second</text>

<!-- Dim_Attacker -->
<rect x="1308.700" y="685.700" width="270.800" height="190.800" class="o"/>
<text x="1315.600" y="716" class="h" textLength="152" lengthAdjust="spacingAndGlyphs">Dim_Attacker</text>
<rect x="1313.200" y="718.200" width="262.600" height="154.600" class="i"/>
<path class="l" d="M1315 750.500H1573M1315 781.500H1573M1315 812.500H1573M1315 843.500H1573M1343 719V843"/>
<use href="#pk" x="1326.500" y="736"/>
<text x="1352.500" y="742" class="r" textLength="83" lengthAdjust="spacingAndGlyphs">attacker_id</text>
<text x="1352.500" y="773" class="r" textLength="69.300" lengthAdjust="spacingAndGlyphs">user_role</text>
<text x="1352.500" y="804" class="r" textLength="108.600" lengthAdjust="spacingAndGlyphs">Attacker_Type</text>
<text x="1352.500" y="835" class="r" textLength="111.500" lengthAdjust="spacingAndGlyphs">Privilege_Level</text>

<!-- connector ends -->
<use href="#inf" x="812" y="405"/><use href="#inf" x="812" y="566"/><use href="#inf" x="812" y="660"/><use href="#inf" x="812" y="719"/>
<rect x="824.400" y="395" width="2" height="330" fill="#efefef"/>
<path d="M823.700 396V730" stroke="#777" stroke-width="1.400"/>
<use href="#inf" x="1195" y="422"/><use href="#inf" x="1195" y="541"/><use href="#inf" x="1195" y="634"/><use href="#inf" x="1195" y="685"/>
<use href="#key" transform="translate(429.500,490) scale(-1,1)"/>
<use href="#key" transform="translate(729,346) scale(-1,1)"/>
<use href="#key" transform="translate(448,746) scale(-1,1)"/>
<use href="#key" transform="translate(744,804) scale(-1,1)"/>
<use href="#key" transform="translate(1274,345)"/>
<use href="#key" transform="translate(1623,355)"/>
<use href="#key" transform="translate(1623,780)"/>
<use href="#key" transform="translate(1291,797)"/>

<!-- vertical scrollbar -->
<rect x="1894" y="218" width="26" height="727" fill="#f7f7f7"/>
<rect x="1894" y="218" width="24" height="24" fill="#f0f0f0"/>
<rect x="1894" y="240" width="24" height="2" fill="#777"/><rect x="1916.500" y="218" width="2" height="24" fill="#9a9a9a"/>
<path d="M1900 234H1912L1906 228Z" fill="#000"/>
<rect x="1894" y="365" width="25" height="406" fill="#f0f0f0"/>
<rect x="1894" y="365" width="25" height="1.500" fill="#dcdcdc"/>
<rect x="1917.500" y="365" width="2" height="406" fill="#6d6d6d"/>
<rect x="1894" y="769" width="25.500" height="2.500" fill="#6d6d6d"/>
<rect x="1894" y="920" width="24" height="24" fill="#f0f0f0"/>
<rect x="1894" y="941.500" width="24" height="2" fill="#777"/>
<path d="M1900 928H1912L1906 935Z" fill="#000"/>

<!-- horizontal scrollbar -->
<rect x="148" y="945" width="1772" height="25" fill="#f7f7f7"/>
<rect x="150" y="945" width="25" height="25" fill="#f0f0f0"/>
<rect x="150" y="968" width="25" height="2" fill="#777"/>
<rect x="174" y="945" width="1.500" height="25" fill="#888"/>
<path d="M167 951V965L160 958Z" fill="#000"/>
<rect x="367" y="945" width="1297" height="25" fill="#f0f0f0"/>
<rect x="367" y="945" width="1297" height="1.500" fill="#dedede"/>
<rect x="367" y="968" width="1298" height="2" fill="#777"/>
<rect x="1663.500" y="945" width="2" height="25" fill="#777"/>
<rect x="1869" y="945" width="25" height="25" fill="#f0f0f0"/>
<rect x="1869" y="968" width="25" height="2" fill="#777"/>
<path d="M1878 951V965L1885 958Z" fill="#000"/>
<rect x="1894" y="945" width="26" height="26" fill="#fff"/>
<path d="M1906.500 947V969M1895 958H1918" stroke="#000" stroke-width="1.600"/>
<path d="M1906.500 945L1902.500 950H1910.500ZM1906.500 971L1902.500 966H1910.500ZM1894 958L1899 954V962ZM1919 958L1914 954V962Z" fill="#000"/>
<rect x="148" y="970" width="1772" height="2" fill="#a9b4cc"/>

<!-- status bar -->
<path d="M20 1002L25 995H41L37 1007" fill="none" stroke="#fff" stroke-width="1.500" opacity="0.9"/>
<text x="54" y="1007" font-size="16" fill="#fff" textLength="106" lengthAdjust="spacingAndGlyphs">Item(s) Saved</text>

<!-- watermark -->
<text x="1066" y="944" font-size="64" font-weight="bold" fill="#e3e3e3" style="font-family:'DejaVu Sans',sans-serif" textLength="213" lengthAdjust="spacingAndGlyphs" direction="rtl">نفذلي</text>
<text x="862" y="999" font-size="34" fill="#bcd6ea" stroke="#bcd6ea" stroke-width="0.9" style="font-family:'DejaVu Sans',sans-serif" textLength="196" lengthAdjust="spacingAndGlyphs">nafezly.com</text>
</svg>
</body>
</html>
